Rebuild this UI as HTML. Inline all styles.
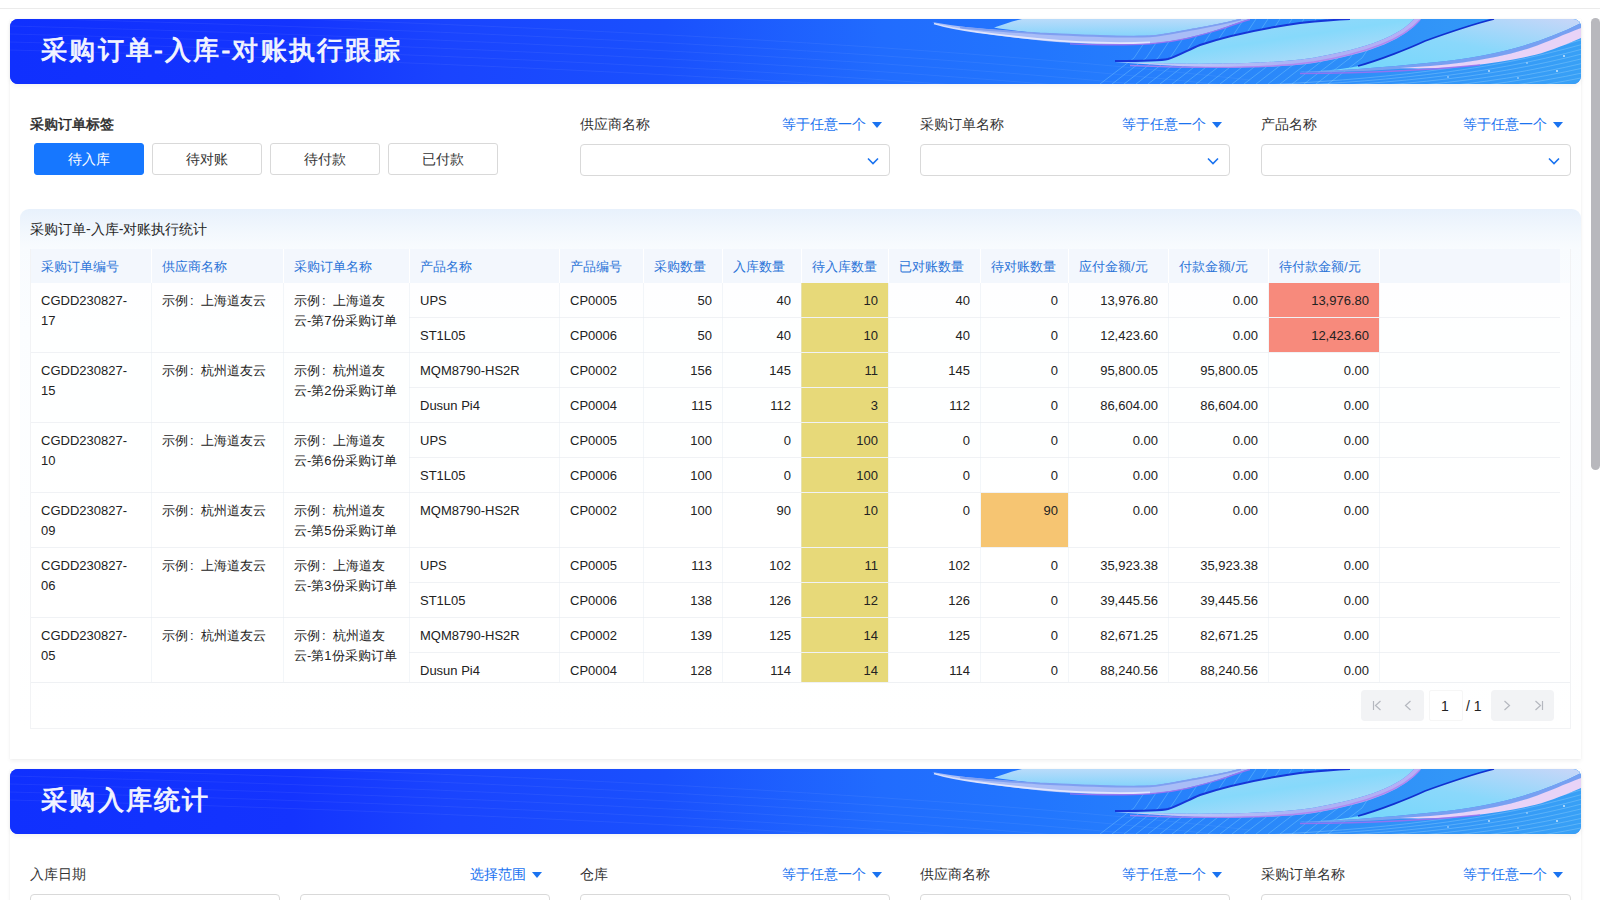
<!DOCTYPE html>
<html><head><meta charset="utf-8">
<style>
*{box-sizing:border-box;margin:0;padding:0}
html,body{width:1600px;height:900px;overflow:hidden;background:#fff;font-family:"Liberation Sans",sans-serif;color:#1f1f1f}
.abs{position:absolute}
.topline{position:absolute;left:0;top:8px;width:1600px;height:1px;background:#ebebeb}
.panel{position:absolute;left:10px;width:1571px;background:#fff;box-shadow:0 2px 4px rgba(0,0,0,0.06),0 0 1px rgba(0,0,0,0.05)}
.banner{position:absolute;left:10px;width:1571px;height:65px;border-radius:8px;overflow:hidden;box-shadow:0 2px 5px rgba(0,0,0,0.05);background:linear-gradient(90deg,#1431ff 0%,#1a45fb 25%,#2563f4 55%,#2f7cf2 100%)}
.banner .t{position:absolute;left:31px;top:16px;font-size:26px;line-height:30px;font-weight:400;-webkit-text-stroke:0.9px #f2f4ff;color:#f2f4ff;letter-spacing:2.25px;white-space:nowrap}
.banner svg{position:absolute;left:0;top:0}
.lbl{position:absolute;font-size:14px;color:#333;white-space:nowrap;line-height:20px}
.lbl.b{font-weight:400;color:#262626;-webkit-text-stroke:0.45px #262626}
.op{position:absolute;font-size:14px;color:#1a73f0;white-space:nowrap;line-height:20px}
.tri{position:absolute;width:0;height:0;border-left:5px solid transparent;border-right:5px solid transparent;border-top:6px solid #1a73f0;top:122px}
.btn{position:absolute;top:143px;width:110px;height:32px;border:1px solid #d9d9d9;border-radius:3px;font-size:14px;line-height:30px;text-align:center;color:#333;background:#fff}
.btn.on{background:#1677ff;border-color:#1677ff;color:#fff}
.sel{position:absolute;height:32px;width:310px;border:1px solid #d9d9d9;border-radius:4px;background:#fff}
.sel svg{position:absolute;right:10px;top:12px}
.tpanel{position:absolute;left:20px;top:209px;width:1561px;height:526px;border-radius:9px;background:linear-gradient(180deg,#e8f1fc 0px,#f1f7fd 20px,#f8fbfe 38px,#fbfdff 120px,#ffffff 520px)}
.ttl{position:absolute;left:30px;top:219px;font-size:14px;line-height:20px;color:#262626;white-space:nowrap}
.thead{position:absolute;background:#f3f7fd}
.th{position:absolute;font-size:13px;line-height:34px;color:#2b74d8;white-space:nowrap;margin-top:1px}
.td{position:absolute;font-size:13px;line-height:20px;color:#222;white-space:nowrap}
.td.r{text-align:right}
.vl{position:absolute;width:1px;background:#ffffff}
.vl2{position:absolute;width:1px;background:rgba(228,234,242,0.45)}
.cl{display:inline-block;width:13px;padding-left:2px}
.hlin{position:absolute;height:1px;background:#f0f2f5}
.hl{position:absolute}
.yel{background:#e7d979}
.org{background:#f6c572}
.red{background:#f78a7c}
.pg{position:absolute;background:#f2f3f5;border-radius:4px;height:31px;top:690px}
.sb{position:absolute;left:1591px;top:18px;width:9px;height:452px;border-radius:5px;background:#b8b8bd}
</style></head><body>
<div class="topline"></div>
<!-- section 1 -->
<div class="panel" style="top:19px;height:740px"></div>
<div class="banner" style="top:19px">
<svg width="1571" height="65" viewBox="10 19 1571 65">
<defs>
<linearGradient id="bg" x1="0" y1="0" x2="1" y2="0">
<stop offset="0" stop-color="#1030fe"/>
<stop offset="0.18" stop-color="#1434fe"/>
<stop offset="0.276" stop-color="#1a44fe"/>
<stop offset="0.416" stop-color="#1a50fd"/>
<stop offset="0.556" stop-color="#216cfe"/>
<stop offset="0.658" stop-color="#2276fe"/>
<stop offset="0.8" stop-color="#2a88fa"/>
<stop offset="1" stop-color="#38a0f6"/>
</linearGradient>
<linearGradient id="lf" x1="0" y1="0" x2="0" y2="1">
<stop offset="0" stop-color="#b9dbfa"/>
<stop offset="1" stop-color="#86d4fb"/>
</linearGradient>
<linearGradient id="lf2" x1="0" y1="0" x2="1" y2="1">
<stop offset="0" stop-color="#a6d6fa"/>
<stop offset="0.5" stop-color="#86d9fb"/>
<stop offset="1" stop-color="#c4dcf8"/>
</linearGradient>
<linearGradient id="lf3" x1="0" y1="1" x2="1" y2="0">
<stop offset="0" stop-color="#6fd6fb"/>
<stop offset="0.55" stop-color="#8ad8fb"/>
<stop offset="1" stop-color="#c9d6f8"/>
</linearGradient>
<linearGradient id="rimg" x1="0" y1="0" x2="1" y2="0">
<stop offset="0" stop-color="#c9d2fa"/>
<stop offset="0.6" stop-color="#a9b2f5"/>
<stop offset="1" stop-color="#b9aef5"/>
</linearGradient>
</defs>
<rect x="10" y="19" width="1571" height="65" fill="url(#bg)"/>
<g stroke="#ffffff" stroke-opacity="0.06" stroke-width="1" fill="none">
<path d="M10 10 C400 20 900 40 1250 80"/>
<path d="M10 18 C400 28 900 48 1250 88"/>
<path d="M10 26 C400 36 900 56 1250 96"/>
<path d="M10 34 C400 44 900 64 1250 104"/>
<path d="M10 42 C400 52 900 72 1250 112"/>
<path d="M10 50 C400 60 900 80 1250 120"/>
</g>
<g stroke="#8fe0ff" stroke-opacity="0.38" stroke-width="0.9" fill="none">
<path d="M1100 84 L1134 58 L1160 19"/>
<path d="M1112 84 L1146 58 L1172 19"/>
<path d="M1124 84 L1158 58 L1184 19"/>
<path d="M1136 84 L1170 58 L1196 19"/>
<path d="M1148 84 L1182 58 L1208 19"/>
<path d="M1160 84 L1194 58 L1220 19"/>
<path d="M1172 84 L1206 58 L1232 19"/>
<path d="M1184 84 L1218 58 L1244 19"/>
<path d="M1196 84 L1230 58 L1256 19"/>
<path d="M1208 84 L1242 58 L1268 19"/>
<path d="M1220 84 L1254 58 L1280 19"/>
<path d="M1232 84 L1266 58 L1292 19"/>
<path d="M1244 84 L1278 58 L1304 19"/>
<path d="M1256 84 L1290 58 L1316 19"/>
<path d="M1268 84 L1302 58 L1328 19"/>
<path d="M1280 84 L1314 58 L1340 19"/>
<path d="M1292 84 L1326 58 L1352 19"/>
<path d="M1304 84 L1338 58 L1364 19"/>
<path d="M1316 84 L1350 58 L1376 19"/>
<path d="M1328 84 L1362 58 L1388 19"/>
</g>
<g stroke="#bfeaff" stroke-opacity="0.35" stroke-width="0.8" fill="none">
<path d="M1250 85.8 C1380 79.0 1480 69.6 1585 38.8"/>
<path d="M1250 87.6 C1380 82.0 1480 73.2 1585 43.6"/>
<path d="M1250 89.4 C1380 85.0 1480 76.8 1585 48.4"/>
<path d="M1250 91.2 C1380 88.0 1480 80.4 1585 53.2"/>
<path d="M1250 93.0 C1380 91.0 1480 84.0 1585 58.0"/>
<path d="M1250 94.8 C1380 94.0 1480 87.6 1585 62.8"/>
<path d="M1250 96.6 C1380 97.0 1480 91.2 1585 67.6"/>
<path d="M1250 98.4 C1380 100.0 1480 94.8 1585 72.4"/>
<path d="M1250 100.2 C1380 103.0 1480 98.4 1585 77.2"/>
</g>
<!-- leaf 1 -->
<path d="M994 27.5 C1004 24 1013 21 1022 19 L1240 19 C1232 21 1215 25 1200 27.4 C1180 31 1160 35 1150 35.6 C1120 37 1080 35 1040 33 C1020 31.5 1005 29.5 994 27.5 Z" fill="url(#lf)"/>
<path d="M932 22 C955 30 990 35 1040 40.4 C1080 44 1110 45 1150 43.5 C1180 41 1200 35 1220 29 C1232 25 1242 21 1250 19 L1240 19 C1232 21 1215 25 1200 27.4 C1180 31 1160 35 1150 35.6 C1120 37 1080 35 1040 33 C990 30 960 27 932 22 Z" fill="#a9bdf7"/>
<path d="M960 27.5 C990 30.5 1020 32 1040 33.5 C1080 35.5 1120 37.5 1150 36.3 C1160 35.7 1180 31.7 1200 28.1 C1215 25.7 1232 21.7 1241 19.5" fill="none" stroke="#7f9ff1" stroke-width="1.8"/>
<path d="M934 23.5 C957 30.5 992 34.5 1040 39.2 C1080 43 1110 44 1150 42.5" fill="none" stroke="#e8eafd" stroke-width="1.8" stroke-opacity="0.9"/>
<path d="M1070 43.8 C1100 45 1130 45 1150 43.8 C1180 41.5 1200 35.5 1220 29.5 C1232 25.5 1242 21.5 1250 19.5" fill="none" stroke="#a970f0" stroke-width="1.3" stroke-opacity="0.85"/>
<!-- leaf 2 -->
<path d="M1115 61 C1140 61 1160 61 1168 59 C1178 56 1188 50 1200 45 C1230 35 1272 27 1300 23 C1320 21 1340 19.5 1350 19 L1414 19 C1400 35 1370 48 1312 58 C1270 64 1200 65 1115 62 Z" fill="url(#lf2)"/>
<path d="M1115 61 C1140 61 1160 61 1168 59 C1178 56 1188 50 1200 45 C1230 35 1272 27 1300 23 C1320 21 1340 19.5 1350 19" fill="none" stroke="#1636d8" stroke-width="2"/>
<path d="M1115 62 C1200 65 1270 64 1312 58 C1370 48 1400 35 1414 19 L1421 19 C1406 38 1374 53 1314 63 C1272 69 1200 69 1115 62 Z" fill="url(#rimg)"/>
<path d="M1130 65.5 C1200 68.5 1272 68 1314 62 C1373 52 1405 37 1420 20" fill="none" stroke="#b07ff0" stroke-width="1.3" stroke-opacity="0.85"/>
<!-- leaf 3 -->
<path d="M1298 72 C1330 71 1350 68 1358 66 C1380 60 1410 48 1425 41 C1450 32 1470 25 1494 19 L1581 19 L1581 23 C1540 44 1490 57 1437 62 C1380 68 1330 71 1298 72 Z" fill="url(#lf3)"/>
<path d="M1358 66 C1380 60 1410 48 1425 41 C1450 32 1470 25 1494 19" fill="none" stroke="#1030d0" stroke-width="1.7"/>
<path d="M1298 72 C1330 71 1380 68 1437 62 C1490 57 1540 44 1581 23 L1581 28 C1540 49 1490 61 1437 66 C1380 71 1330 73 1298 72 Z" fill="#77a0f2"/>
<path d="M1400 68 C1440 66 1490 61 1530 48 C1550 41 1565 34 1581 28 L1581 38 C1560 47 1545 53 1530 56 C1490 65 1440 70 1400 68 Z" fill="#e8d3f7"/>
<path d="M1300 73.5 C1360 73 1420 71 1480 65" fill="none" stroke="#a070f0" stroke-width="1.6" stroke-opacity="0.85"/>
<g fill="#ffffff" fill-opacity="0.75"><circle cx="1564" cy="56" r="1"/><circle cx="1489" cy="71" r="0.9"/><circle cx="1557" cy="71" r="1"/><circle cx="1527" cy="63" r="0.8"/><circle cx="1518" cy="78" r="0.8"/><circle cx="1448" cy="77" r="0.8"/></g>
</svg>
<div class="t">采购订单-入库-对账执行跟踪</div>
</div>

<div class="lbl b" style="left:30px;top:114px">采购订单标签</div>
<div class="btn on" style="left:34px">待入库</div>
<div class="btn" style="left:152px">待对账</div>
<div class="btn" style="left:270px">待付款</div>
<div class="btn" style="left:388px">已付款</div>

<div class="lbl" style="left:580px;top:114px">供应商名称</div>
<div class="op" style="left:782px;top:114px">等于任意一个</div><div class="tri" style="left:872px;top:122px"></div>
<div class="sel" style="left:580px;top:144px"><svg width="12" height="8" viewBox="0 0 12 8"><path d="M1 1.5 L6 6.5 L11 1.5" fill="none" stroke="#1a73f0" stroke-width="1.6"/></svg></div>

<div class="lbl" style="left:920px;top:114px">采购订单名称</div>
<div class="op" style="left:1122px;top:114px">等于任意一个</div><div class="tri" style="left:1212px;top:122px"></div>
<div class="sel" style="left:920px;top:144px"><svg width="12" height="8" viewBox="0 0 12 8"><path d="M1 1.5 L6 6.5 L11 1.5" fill="none" stroke="#1a73f0" stroke-width="1.6"/></svg></div>

<div class="lbl" style="left:1261px;top:114px">产品名称</div>
<div class="op" style="left:1463px;top:114px">等于任意一个</div><div class="tri" style="left:1553px;top:122px"></div>
<div class="sel" style="left:1261px;top:144px"><svg width="12" height="8" viewBox="0 0 12 8"><path d="M1 1.5 L6 6.5 L11 1.5" fill="none" stroke="#1a73f0" stroke-width="1.6"/></svg></div>

<div class="tpanel"></div>
<div class="ttl">采购订单-入库-对账执行统计</div>
<div style="position:absolute;left:0;top:0;width:1600px;height:683px;overflow:hidden"><div class="abs" style="left:30px;top:283px;width:1540px;height:445px;background:rgba(255,255,255,0.72)"></div>
<div class="thead" style="left:30px;top:249px;width:1530px;height:34px"></div>
<div class="th" style="left:41px;top:249px">采购订单编号</div>
<div class="vl" style="left:151px;top:249px;height:34px"></div>
<div class="th" style="left:162px;top:249px">供应商名称</div>
<div class="vl" style="left:283px;top:249px;height:34px"></div>
<div class="th" style="left:294px;top:249px">采购订单名称</div>
<div class="vl" style="left:409px;top:249px;height:34px"></div>
<div class="th" style="left:420px;top:249px">产品名称</div>
<div class="vl" style="left:559px;top:249px;height:34px"></div>
<div class="th" style="left:570px;top:249px">产品编号</div>
<div class="vl" style="left:643px;top:249px;height:34px"></div>
<div class="th" style="left:654px;top:249px">采购数量</div>
<div class="vl" style="left:722px;top:249px;height:34px"></div>
<div class="th" style="left:733px;top:249px">入库数量</div>
<div class="vl" style="left:801px;top:249px;height:34px"></div>
<div class="th" style="left:812px;top:249px">待入库数量</div>
<div class="vl" style="left:888px;top:249px;height:34px"></div>
<div class="th" style="left:899px;top:249px">已对账数量</div>
<div class="vl" style="left:980px;top:249px;height:34px"></div>
<div class="th" style="left:991px;top:249px">待对账数量</div>
<div class="vl" style="left:1068px;top:249px;height:34px"></div>
<div class="th" style="left:1079px;top:249px">应付金额/元</div>
<div class="vl" style="left:1168px;top:249px;height:34px"></div>
<div class="th" style="left:1179px;top:249px">付款金额/元</div>
<div class="vl" style="left:1268px;top:249px;height:34px"></div>
<div class="th" style="left:1279px;top:249px">待付款金额/元</div>
<div class="vl" style="left:1379px;top:249px;height:34px"></div>
<div class="td" style="left:41px;top:291px">CGDD230827-<br>17</div>
<div class="td" style="left:162px;top:291px">示例<span class="cl">:</span>上海道友云</div>
<div class="td" style="left:294px;top:291px">示例<span class="cl">:</span>上海道友<br>云-第7份采购订单</div>
<div class="hl yel" style="left:801px;top:283px;width:87px;height:35px"></div>
<div class="hl red" style="left:1269px;top:283px;width:110px;height:35px"></div>
<div class="td" style="left:420px;top:291px">UPS</div>
<div class="td" style="left:570px;top:291px">CP0005</div>
<div class="td r" style="right:888px;top:291px">50</div>
<div class="td r" style="right:809px;top:291px">40</div>
<div class="td r" style="right:722px;top:291px">10</div>
<div class="td r" style="right:630px;top:291px">40</div>
<div class="td r" style="right:542px;top:291px">0</div>
<div class="td r" style="right:442px;top:291px">13,976.80</div>
<div class="td r" style="right:342px;top:291px">0.00</div>
<div class="td r" style="right:231px;top:291px">13,976.80</div>
<div class="hlin" style="left:409px;top:317px;width:1151px"></div>
<div class="hl yel" style="left:801px;top:318px;width:87px;height:35px"></div>
<div class="hl red" style="left:1269px;top:318px;width:110px;height:35px"></div>
<div class="td" style="left:420px;top:326px">ST1L05</div>
<div class="td" style="left:570px;top:326px">CP0006</div>
<div class="td r" style="right:888px;top:326px">50</div>
<div class="td r" style="right:809px;top:326px">40</div>
<div class="td r" style="right:722px;top:326px">10</div>
<div class="td r" style="right:630px;top:326px">40</div>
<div class="td r" style="right:542px;top:326px">0</div>
<div class="td r" style="right:442px;top:326px">12,423.60</div>
<div class="td r" style="right:342px;top:326px">0.00</div>
<div class="td r" style="right:231px;top:326px">12,423.60</div>
<div class="hlin" style="left:30px;top:352px;width:1530px"></div>
<div class="td" style="left:41px;top:361px">CGDD230827-<br>15</div>
<div class="td" style="left:162px;top:361px">示例<span class="cl">:</span>杭州道友云</div>
<div class="td" style="left:294px;top:361px">示例<span class="cl">:</span>杭州道友<br>云-第2份采购订单</div>
<div class="hl yel" style="left:801px;top:353px;width:87px;height:35px"></div>
<div class="td" style="left:420px;top:361px">MQM8790-HS2R</div>
<div class="td" style="left:570px;top:361px">CP0002</div>
<div class="td r" style="right:888px;top:361px">156</div>
<div class="td r" style="right:809px;top:361px">145</div>
<div class="td r" style="right:722px;top:361px">11</div>
<div class="td r" style="right:630px;top:361px">145</div>
<div class="td r" style="right:542px;top:361px">0</div>
<div class="td r" style="right:442px;top:361px">95,800.05</div>
<div class="td r" style="right:342px;top:361px">95,800.05</div>
<div class="td r" style="right:231px;top:361px">0.00</div>
<div class="hlin" style="left:409px;top:387px;width:1151px"></div>
<div class="hl yel" style="left:801px;top:388px;width:87px;height:35px"></div>
<div class="td" style="left:420px;top:396px">Dusun Pi4</div>
<div class="td" style="left:570px;top:396px">CP0004</div>
<div class="td r" style="right:888px;top:396px">115</div>
<div class="td r" style="right:809px;top:396px">112</div>
<div class="td r" style="right:722px;top:396px">3</div>
<div class="td r" style="right:630px;top:396px">112</div>
<div class="td r" style="right:542px;top:396px">0</div>
<div class="td r" style="right:442px;top:396px">86,604.00</div>
<div class="td r" style="right:342px;top:396px">86,604.00</div>
<div class="td r" style="right:231px;top:396px">0.00</div>
<div class="hlin" style="left:30px;top:422px;width:1530px"></div>
<div class="td" style="left:41px;top:431px">CGDD230827-<br>10</div>
<div class="td" style="left:162px;top:431px">示例<span class="cl">:</span>上海道友云</div>
<div class="td" style="left:294px;top:431px">示例<span class="cl">:</span>上海道友<br>云-第6份采购订单</div>
<div class="hl yel" style="left:801px;top:423px;width:87px;height:35px"></div>
<div class="td" style="left:420px;top:431px">UPS</div>
<div class="td" style="left:570px;top:431px">CP0005</div>
<div class="td r" style="right:888px;top:431px">100</div>
<div class="td r" style="right:809px;top:431px">0</div>
<div class="td r" style="right:722px;top:431px">100</div>
<div class="td r" style="right:630px;top:431px">0</div>
<div class="td r" style="right:542px;top:431px">0</div>
<div class="td r" style="right:442px;top:431px">0.00</div>
<div class="td r" style="right:342px;top:431px">0.00</div>
<div class="td r" style="right:231px;top:431px">0.00</div>
<div class="hlin" style="left:409px;top:457px;width:1151px"></div>
<div class="hl yel" style="left:801px;top:458px;width:87px;height:35px"></div>
<div class="td" style="left:420px;top:466px">ST1L05</div>
<div class="td" style="left:570px;top:466px">CP0006</div>
<div class="td r" style="right:888px;top:466px">100</div>
<div class="td r" style="right:809px;top:466px">0</div>
<div class="td r" style="right:722px;top:466px">100</div>
<div class="td r" style="right:630px;top:466px">0</div>
<div class="td r" style="right:542px;top:466px">0</div>
<div class="td r" style="right:442px;top:466px">0.00</div>
<div class="td r" style="right:342px;top:466px">0.00</div>
<div class="td r" style="right:231px;top:466px">0.00</div>
<div class="hlin" style="left:30px;top:492px;width:1530px"></div>
<div class="td" style="left:41px;top:501px">CGDD230827-<br>09</div>
<div class="td" style="left:162px;top:501px">示例<span class="cl">:</span>杭州道友云</div>
<div class="td" style="left:294px;top:501px">示例<span class="cl">:</span>杭州道友<br>云-第5份采购订单</div>
<div class="hl yel" style="left:801px;top:493px;width:87px;height:55px"></div>
<div class="hl org" style="left:981px;top:493px;width:87px;height:55px"></div>
<div class="td" style="left:420px;top:501px">MQM8790-HS2R</div>
<div class="td" style="left:570px;top:501px">CP0002</div>
<div class="td r" style="right:888px;top:501px">100</div>
<div class="td r" style="right:809px;top:501px">90</div>
<div class="td r" style="right:722px;top:501px">10</div>
<div class="td r" style="right:630px;top:501px">0</div>
<div class="td r" style="right:542px;top:501px">90</div>
<div class="td r" style="right:442px;top:501px">0.00</div>
<div class="td r" style="right:342px;top:501px">0.00</div>
<div class="td r" style="right:231px;top:501px">0.00</div>
<div class="hlin" style="left:30px;top:547px;width:1530px"></div>
<div class="td" style="left:41px;top:556px">CGDD230827-<br>06</div>
<div class="td" style="left:162px;top:556px">示例<span class="cl">:</span>上海道友云</div>
<div class="td" style="left:294px;top:556px">示例<span class="cl">:</span>上海道友<br>云-第3份采购订单</div>
<div class="hl yel" style="left:801px;top:548px;width:87px;height:35px"></div>
<div class="td" style="left:420px;top:556px">UPS</div>
<div class="td" style="left:570px;top:556px">CP0005</div>
<div class="td r" style="right:888px;top:556px">113</div>
<div class="td r" style="right:809px;top:556px">102</div>
<div class="td r" style="right:722px;top:556px">11</div>
<div class="td r" style="right:630px;top:556px">102</div>
<div class="td r" style="right:542px;top:556px">0</div>
<div class="td r" style="right:442px;top:556px">35,923.38</div>
<div class="td r" style="right:342px;top:556px">35,923.38</div>
<div class="td r" style="right:231px;top:556px">0.00</div>
<div class="hlin" style="left:409px;top:582px;width:1151px"></div>
<div class="hl yel" style="left:801px;top:583px;width:87px;height:35px"></div>
<div class="td" style="left:420px;top:591px">ST1L05</div>
<div class="td" style="left:570px;top:591px">CP0006</div>
<div class="td r" style="right:888px;top:591px">138</div>
<div class="td r" style="right:809px;top:591px">126</div>
<div class="td r" style="right:722px;top:591px">12</div>
<div class="td r" style="right:630px;top:591px">126</div>
<div class="td r" style="right:542px;top:591px">0</div>
<div class="td r" style="right:442px;top:591px">39,445.56</div>
<div class="td r" style="right:342px;top:591px">39,445.56</div>
<div class="td r" style="right:231px;top:591px">0.00</div>
<div class="hlin" style="left:30px;top:617px;width:1530px"></div>
<div class="td" style="left:41px;top:626px">CGDD230827-<br>05</div>
<div class="td" style="left:162px;top:626px">示例<span class="cl">:</span>杭州道友云</div>
<div class="td" style="left:294px;top:626px">示例<span class="cl">:</span>杭州道友<br>云-第1份采购订单</div>
<div class="hl yel" style="left:801px;top:618px;width:87px;height:35px"></div>
<div class="td" style="left:420px;top:626px">MQM8790-HS2R</div>
<div class="td" style="left:570px;top:626px">CP0002</div>
<div class="td r" style="right:888px;top:626px">139</div>
<div class="td r" style="right:809px;top:626px">125</div>
<div class="td r" style="right:722px;top:626px">14</div>
<div class="td r" style="right:630px;top:626px">125</div>
<div class="td r" style="right:542px;top:626px">0</div>
<div class="td r" style="right:442px;top:626px">82,671.25</div>
<div class="td r" style="right:342px;top:626px">82,671.25</div>
<div class="td r" style="right:231px;top:626px">0.00</div>
<div class="hlin" style="left:409px;top:652px;width:1151px"></div>
<div class="hl yel" style="left:801px;top:653px;width:87px;height:35px"></div>
<div class="td" style="left:420px;top:661px">Dusun Pi4</div>
<div class="td" style="left:570px;top:661px">CP0004</div>
<div class="td r" style="right:888px;top:661px">128</div>
<div class="td r" style="right:809px;top:661px">114</div>
<div class="td r" style="right:722px;top:661px">14</div>
<div class="td r" style="right:630px;top:661px">114</div>
<div class="td r" style="right:542px;top:661px">0</div>
<div class="td r" style="right:442px;top:661px">88,240.56</div>
<div class="td r" style="right:342px;top:661px">88,240.56</div>
<div class="td r" style="right:231px;top:661px">0.00</div>
<div class="hlin" style="left:30px;top:687px;width:1530px"></div>
<div class="vl2" style="left:151px;top:283px;height:400px"></div>
<div class="vl2" style="left:283px;top:283px;height:400px"></div>
<div class="vl2" style="left:409px;top:283px;height:400px"></div>
<div class="vl2" style="left:559px;top:283px;height:400px"></div>
<div class="vl2" style="left:643px;top:283px;height:400px"></div>
<div class="vl2" style="left:722px;top:283px;height:400px"></div>
<div class="vl2" style="left:801px;top:283px;height:400px"></div>
<div class="vl2" style="left:888px;top:283px;height:400px"></div>
<div class="vl2" style="left:980px;top:283px;height:400px"></div>
<div class="vl2" style="left:1068px;top:283px;height:400px"></div>
<div class="vl2" style="left:1168px;top:283px;height:400px"></div>
<div class="vl2" style="left:1268px;top:283px;height:400px"></div>
<div class="vl2" style="left:1379px;top:283px;height:400px"></div></div><div class="abs" style="left:30px;top:682px;width:1540px;height:1px;background:#eff1f4"></div><div class="abs" style="left:30px;top:249px;width:1541px;height:480px;border:1px solid #f2f3f5;border-top:none"></div>

<div class="pg" style="left:1361px;width:63px"></div>
<div class="abs" style="left:1429px;top:690px;width:34px;height:31px;background:#fff;border:1px solid #f6f6f6;border-radius:2px"></div>
<div class="td" style="left:1441px;top:696px;font-size:14px">1</div>
<div class="td" style="left:1466px;top:696px;font-size:14px">/ 1</div>
<div class="pg" style="left:1491px;width:63px"></div>
<svg class="abs" style="left:1361px;top:690px" width="63" height="31" viewBox="0 0 63 31"><path d="M12.5 11v9 M19.5 11l-5 4.5 5 4.5" fill="none" stroke="#b5b8bf" stroke-width="1.2"/><path d="M49.5 11l-5 4.5 5 4.5" fill="none" stroke="#b5b8bf" stroke-width="1.2"/></svg>
<svg class="abs" style="left:1491px;top:690px" width="63" height="31" viewBox="0 0 63 31"><path d="M13.5 11l5 4.5-5 4.5" fill="none" stroke="#b5b8bf" stroke-width="1.2"/><path d="M44.5 11l5 4.5-5 4.5 M51.5 11v9" fill="none" stroke="#b5b8bf" stroke-width="1.2"/></svg>

<!-- section 2 -->
<div class="panel" style="top:769px;height:200px"></div>
<div class="banner" style="top:769px">
<svg width="1571" height="65" viewBox="10 19 1571 65">
<defs>
<linearGradient id="bg" x1="0" y1="0" x2="1" y2="0">
<stop offset="0" stop-color="#1030fe"/>
<stop offset="0.18" stop-color="#1434fe"/>
<stop offset="0.276" stop-color="#1a44fe"/>
<stop offset="0.416" stop-color="#1a50fd"/>
<stop offset="0.556" stop-color="#216cfe"/>
<stop offset="0.658" stop-color="#2276fe"/>
<stop offset="0.8" stop-color="#2a88fa"/>
<stop offset="1" stop-color="#38a0f6"/>
</linearGradient>
<linearGradient id="lf" x1="0" y1="0" x2="0" y2="1">
<stop offset="0" stop-color="#b9dbfa"/>
<stop offset="1" stop-color="#86d4fb"/>
</linearGradient>
<linearGradient id="lf2" x1="0" y1="0" x2="1" y2="1">
<stop offset="0" stop-color="#a6d6fa"/>
<stop offset="0.5" stop-color="#86d9fb"/>
<stop offset="1" stop-color="#c4dcf8"/>
</linearGradient>
<linearGradient id="lf3" x1="0" y1="1" x2="1" y2="0">
<stop offset="0" stop-color="#6fd6fb"/>
<stop offset="0.55" stop-color="#8ad8fb"/>
<stop offset="1" stop-color="#c9d6f8"/>
</linearGradient>
<linearGradient id="rimg" x1="0" y1="0" x2="1" y2="0">
<stop offset="0" stop-color="#c9d2fa"/>
<stop offset="0.6" stop-color="#a9b2f5"/>
<stop offset="1" stop-color="#b9aef5"/>
</linearGradient>
</defs>
<rect x="10" y="19" width="1571" height="65" fill="url(#bg)"/>
<g stroke="#ffffff" stroke-opacity="0.06" stroke-width="1" fill="none">
<path d="M10 10 C400 20 900 40 1250 80"/>
<path d="M10 18 C400 28 900 48 1250 88"/>
<path d="M10 26 C400 36 900 56 1250 96"/>
<path d="M10 34 C400 44 900 64 1250 104"/>
<path d="M10 42 C400 52 900 72 1250 112"/>
<path d="M10 50 C400 60 900 80 1250 120"/>
</g>
<g stroke="#8fe0ff" stroke-opacity="0.38" stroke-width="0.9" fill="none">
<path d="M1100 84 L1134 58 L1160 19"/>
<path d="M1112 84 L1146 58 L1172 19"/>
<path d="M1124 84 L1158 58 L1184 19"/>
<path d="M1136 84 L1170 58 L1196 19"/>
<path d="M1148 84 L1182 58 L1208 19"/>
<path d="M1160 84 L1194 58 L1220 19"/>
<path d="M1172 84 L1206 58 L1232 19"/>
<path d="M1184 84 L1218 58 L1244 19"/>
<path d="M1196 84 L1230 58 L1256 19"/>
<path d="M1208 84 L1242 58 L1268 19"/>
<path d="M1220 84 L1254 58 L1280 19"/>
<path d="M1232 84 L1266 58 L1292 19"/>
<path d="M1244 84 L1278 58 L1304 19"/>
<path d="M1256 84 L1290 58 L1316 19"/>
<path d="M1268 84 L1302 58 L1328 19"/>
<path d="M1280 84 L1314 58 L1340 19"/>
<path d="M1292 84 L1326 58 L1352 19"/>
<path d="M1304 84 L1338 58 L1364 19"/>
<path d="M1316 84 L1350 58 L1376 19"/>
<path d="M1328 84 L1362 58 L1388 19"/>
</g>
<g stroke="#bfeaff" stroke-opacity="0.35" stroke-width="0.8" fill="none">
<path d="M1250 85.8 C1380 79.0 1480 69.6 1585 38.8"/>
<path d="M1250 87.6 C1380 82.0 1480 73.2 1585 43.6"/>
<path d="M1250 89.4 C1380 85.0 1480 76.8 1585 48.4"/>
<path d="M1250 91.2 C1380 88.0 1480 80.4 1585 53.2"/>
<path d="M1250 93.0 C1380 91.0 1480 84.0 1585 58.0"/>
<path d="M1250 94.8 C1380 94.0 1480 87.6 1585 62.8"/>
<path d="M1250 96.6 C1380 97.0 1480 91.2 1585 67.6"/>
<path d="M1250 98.4 C1380 100.0 1480 94.8 1585 72.4"/>
<path d="M1250 100.2 C1380 103.0 1480 98.4 1585 77.2"/>
</g>
<!-- leaf 1 -->
<path d="M994 27.5 C1004 24 1013 21 1022 19 L1240 19 C1232 21 1215 25 1200 27.4 C1180 31 1160 35 1150 35.6 C1120 37 1080 35 1040 33 C1020 31.5 1005 29.5 994 27.5 Z" fill="url(#lf)"/>
<path d="M932 22 C955 30 990 35 1040 40.4 C1080 44 1110 45 1150 43.5 C1180 41 1200 35 1220 29 C1232 25 1242 21 1250 19 L1240 19 C1232 21 1215 25 1200 27.4 C1180 31 1160 35 1150 35.6 C1120 37 1080 35 1040 33 C990 30 960 27 932 22 Z" fill="#a9bdf7"/>
<path d="M960 27.5 C990 30.5 1020 32 1040 33.5 C1080 35.5 1120 37.5 1150 36.3 C1160 35.7 1180 31.7 1200 28.1 C1215 25.7 1232 21.7 1241 19.5" fill="none" stroke="#7f9ff1" stroke-width="1.8"/>
<path d="M934 23.5 C957 30.5 992 34.5 1040 39.2 C1080 43 1110 44 1150 42.5" fill="none" stroke="#e8eafd" stroke-width="1.8" stroke-opacity="0.9"/>
<path d="M1070 43.8 C1100 45 1130 45 1150 43.8 C1180 41.5 1200 35.5 1220 29.5 C1232 25.5 1242 21.5 1250 19.5" fill="none" stroke="#a970f0" stroke-width="1.3" stroke-opacity="0.85"/>
<!-- leaf 2 -->
<path d="M1115 61 C1140 61 1160 61 1168 59 C1178 56 1188 50 1200 45 C1230 35 1272 27 1300 23 C1320 21 1340 19.5 1350 19 L1414 19 C1400 35 1370 48 1312 58 C1270 64 1200 65 1115 62 Z" fill="url(#lf2)"/>
<path d="M1115 61 C1140 61 1160 61 1168 59 C1178 56 1188 50 1200 45 C1230 35 1272 27 1300 23 C1320 21 1340 19.5 1350 19" fill="none" stroke="#1636d8" stroke-width="2"/>
<path d="M1115 62 C1200 65 1270 64 1312 58 C1370 48 1400 35 1414 19 L1421 19 C1406 38 1374 53 1314 63 C1272 69 1200 69 1115 62 Z" fill="url(#rimg)"/>
<path d="M1130 65.5 C1200 68.5 1272 68 1314 62 C1373 52 1405 37 1420 20" fill="none" stroke="#b07ff0" stroke-width="1.3" stroke-opacity="0.85"/>
<!-- leaf 3 -->
<path d="M1298 72 C1330 71 1350 68 1358 66 C1380 60 1410 48 1425 41 C1450 32 1470 25 1494 19 L1581 19 L1581 23 C1540 44 1490 57 1437 62 C1380 68 1330 71 1298 72 Z" fill="url(#lf3)"/>
<path d="M1358 66 C1380 60 1410 48 1425 41 C1450 32 1470 25 1494 19" fill="none" stroke="#1030d0" stroke-width="1.7"/>
<path d="M1298 72 C1330 71 1380 68 1437 62 C1490 57 1540 44 1581 23 L1581 28 C1540 49 1490 61 1437 66 C1380 71 1330 73 1298 72 Z" fill="#77a0f2"/>
<path d="M1400 68 C1440 66 1490 61 1530 48 C1550 41 1565 34 1581 28 L1581 38 C1560 47 1545 53 1530 56 C1490 65 1440 70 1400 68 Z" fill="#e8d3f7"/>
<path d="M1300 73.5 C1360 73 1420 71 1480 65" fill="none" stroke="#a070f0" stroke-width="1.6" stroke-opacity="0.85"/>
<g fill="#ffffff" fill-opacity="0.75"><circle cx="1564" cy="56" r="1"/><circle cx="1489" cy="71" r="0.9"/><circle cx="1557" cy="71" r="1"/><circle cx="1527" cy="63" r="0.8"/><circle cx="1518" cy="78" r="0.8"/><circle cx="1448" cy="77" r="0.8"/></g>
</svg>
<div class="t">采购入库统计</div>
</div>
<div class="lbl" style="left:30px;top:864px">入库日期</div>
<div class="op" style="left:470px;top:864px">选择范围</div><div class="tri" style="left:532px;top:872px"></div>
<div class="sel" style="left:30px;top:894px;width:250px"></div>
<div class="sel" style="left:300px;top:894px;width:250px"></div>
<div class="lbl" style="left:580px;top:864px">仓库</div>
<div class="op" style="left:782px;top:864px">等于任意一个</div><div class="tri" style="left:872px;top:872px"></div>
<div class="sel" style="left:580px;top:894px"></div>
<div class="lbl" style="left:920px;top:864px">供应商名称</div>
<div class="op" style="left:1122px;top:864px">等于任意一个</div><div class="tri" style="left:1212px;top:872px"></div>
<div class="sel" style="left:920px;top:894px"></div>
<div class="lbl" style="left:1261px;top:864px">采购订单名称</div>
<div class="op" style="left:1463px;top:864px">等于任意一个</div><div class="tri" style="left:1553px;top:872px"></div>
<div class="sel" style="left:1261px;top:894px"></div>

<div class="sb"></div>
</body></html>
